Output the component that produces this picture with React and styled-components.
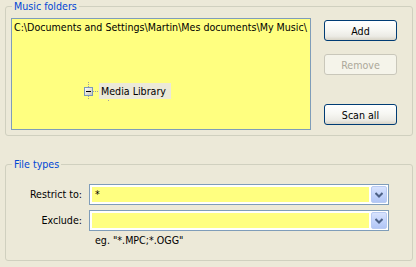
import React from "react";
import styled, { createGlobalStyle } from "styled-components";

const Global = createGlobalStyle`
  html, body { margin: 0; padding: 0; background: #ECE9D8; }
  body { font-family: "DejaVu Sans Condensed", "DejaVu Sans", "Liberation Sans", sans-serif; font-size: 10.6px; color: #000; }
  * { box-sizing: border-box; }
`;

const Page = styled.div`
  width: 416px;
  height: 267px;
  padding: 0 3px 0 5px;
  background: #ECE9D8;
  overflow: hidden;
`;

const Group = styled.fieldset`
  width: 408px;
  margin: ${(p) => p.$top || 0}px 0 0 0;
  padding: ${(p) => p.$pad};
  border: 1px solid #D0D0BF;
  border-radius: 3px;
  min-width: 0;
`;

const Legend = styled.legend`
  margin-left: 1px;
  padding: 0 2px;
  color: #0046D5;
  line-height: 13px;
  font-size: inherit;
`;

const FolderRow = styled.div`
  display: flex;
  gap: 13px;
`;

const List = styled.div`
  width: 300px;
  height: 112px;
  border: 1px solid #7F9DB9;
  background: #FFFF80;
  padding: 2px;
  display: flex;
  flex-direction: column;
`;

const PathLine = styled.div`
  line-height: 13px;
  white-space: nowrap;
`;

const TreeRow = styled.div`
  position: relative;
  display: flex;
  align-items: center;
  height: 18px;
  margin: 48px 0 0 70px;
  &::after {
    content: "";
    position: absolute;
    left: 24px;
    top: 18px;
    width: 1px;
    height: 1px;
    background: #A0A0A0;
  }
`;

const TreeLabel = styled.span`
  background: #ECE9D8;
  line-height: 16px;
  padding: 0 5px 0 2px;
  white-space: nowrap;
`;

const ButtonColumn = styled.div`
  width: 73px;
  display: flex;
  flex-direction: column;
  gap: 13px;
  padding: 2px 0 5px 0;
`;

const Button = styled.button`
  width: 73px;
  height: 21px;
  padding: 0;
  font: inherit;
  border-radius: 3px;
  border: 1px solid ${(p) => (p.disabled ? "#C9C7BA" : "#003C74")};
  color: ${(p) => (p.disabled ? "#ACA899" : "#000")};
  background: ${(p) =>
    p.disabled
      ? "#F5F4EA"
      : "linear-gradient(180deg, #FFFFFF 0%, #F7F7F3 45%, #ECEBE5 80%, #D8D4C7 100%)"};
  margin-top: ${(p) => (p.$bottom ? "auto" : "0")};
`;

const TypesGrid = styled.div`
  display: grid;
  grid-template-columns: 71px 300px;
  column-gap: 7px;
  row-gap: 5px;
`;

const Label = styled.label`
  text-align: right;
  line-height: 21px;
  white-space: nowrap;
`;

const Combo = styled.div`
  height: 21px;
  border: 1px solid #7F9DB9;
  background: #FFFFFF;
  padding: 1px;
  display: flex;
  gap: 2px;
`;

const Field = styled.div`
  flex: 1;
  margin: 1px 0 1px 1px;
  background: #FFFF80;
  padding: 0 3px;
  line-height: 15px;
`;

const DropButton = styled.div`
  width: 16px;
  height: 17px;
  border: 1px solid #B9CBF3;
  border-radius: 2px;
  background: linear-gradient(180deg, #D8E3FD 0%, #C3D4FB 50%, #B2C6F5 100%);
  display: flex;
  align-items: center;
  justify-content: center;
`;

const Hint = styled.div`
  grid-column: 2;
  margin-top: -2px;
  padding-left: 6px;
  line-height: 13px;
`;

const Chevron = () => (
  <svg width="8" height="6" viewBox="0 0 8 6">
    <polyline points="0.5,1 4,4.5 7.5,1" fill="none" stroke="#4D6185" strokeWidth="2" />
  </svg>
);

const Expander = () => (
  <svg width="15" height="18" viewBox="0 0 15 18">
    <defs>
      <linearGradient id="exg" x1="0" y1="0" x2="1" y2="1">
        <stop offset="0" stopColor="#FFFFFF" />
        <stop offset="1" stopColor="#C6C2B4" />
      </linearGradient>
    </defs>
    <line x1="4.5" y1="0" x2="4.5" y2="5" stroke="#A0A0A0" strokeDasharray="1 1" />
    <line x1="4.5" y1="14" x2="4.5" y2="18" stroke="#A0A0A0" strokeDasharray="1 1" />
    <line x1="9" y1="9.5" x2="15" y2="9.5" stroke="#A0A0A0" strokeDasharray="1 1" />
    <rect x="0.5" y="5.5" width="8" height="8" fill="url(#exg)" stroke="#7A99BC" />
    <line x1="2" y1="9.5" x2="7" y2="9.5" stroke="#000" />
  </svg>
);

export default function App() {
  return (
    <>
      <Global />
      <Page>
        <Group $pad="5px 15px 5px 5px">
          <Legend>Music folders</Legend>
          <FolderRow>
            <List>
              <PathLine>C:\Documents and Settings\Martin\Mes documents\My Music\</PathLine>
              <TreeRow>
                <Expander />
                <TreeLabel>Media Library</TreeLabel>
              </TreeRow>
            </List>
            <ButtonColumn>
              <Button>Add</Button>
              <Button disabled>Remove</Button>
              <Button $bottom>Scan all</Button>
            </ButtonColumn>
          </FolderRow>
        </Group>
        <Group $top={22} $pad="13px 23px 13px 5px">
          <Legend>File types</Legend>
          <TypesGrid>
            <Label>Restrict to:</Label>
            <Combo>
              <Field>*</Field>
              <DropButton><Chevron /></DropButton>
            </Combo>
            <Label>Exclude:</Label>
            <Combo>
              <Field></Field>
              <DropButton><Chevron /></DropButton>
            </Combo>
            <Hint>eg. "*.MPC;*.OGG"</Hint>
          </TypesGrid>
        </Group>
      </Page>
    </>
  );
}
